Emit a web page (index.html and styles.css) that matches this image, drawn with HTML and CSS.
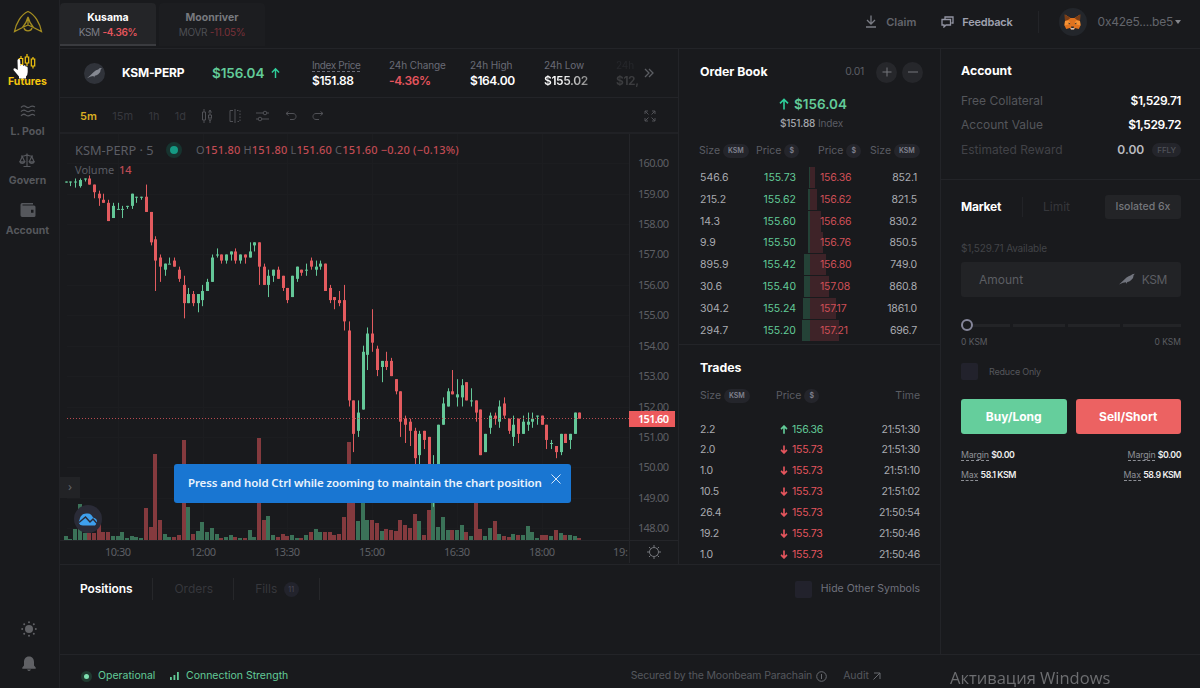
FILE: index.html
```html
<!DOCTYPE html>
<html lang="en">
<head>
  <meta charset="UTF-8">
  <meta name="viewport" content="width=device-width, initial-scale=1.0">
  <title>KSM-PERP</title>
  <link rel="stylesheet" href="styles.css">
</head>
<body>
  <svg class="defs">
    <symbol id="bird" viewBox="0 0 16 13"><path d="M0 11.500 3 8.800 7.500 4.600Q9.500 2.800 12 2.200 13 .6 15.800 .7L14.600 2.200Q14.800 5 12 7.300 10.300 8.800 8.300 8.900L7.600 10.700 6.900 9.200 4 9.800Z"/></symbol>
    <symbol id="up" viewBox="0 0 10 12"><path d="M5 11.500V1.500M1 5.400 5 1.400 9 5.400"/></symbol>
    <symbol id="down" viewBox="0 0 10 12"><path d="M5 .5V10.500M1 6.600 5 10.600 9 6.600"/></symbol>
  </svg>

  <div class="app">
    <nav class="sidebar">
      <svg class="sidebar__logo" width="30" height="24" viewBox="0 0 30 24">
        <path d="M1.500 21.500C3 13.500 8 4.500 15 1.500 22 4.500 27 13.500 28.500 21.500L20.500 17.500Q16.500 13 15 7 13.500 13 9.500 17.500ZM15 8V15M9.500 17.500 15 15 20.500 17.500M11 18C12 21.800 18 21.800 19 18"/>
      </svg>
      <a class="nav-item is-active">
        <svg width="18" height="16" viewBox="0 0 18 16"><path d="M3 2v2M3 11v2M1.300 4.500h3.400v6H1.300zM9 0v3M9 9v3M7.300 3h3.400v6H7.300zM15 3v2M15 12v2.500M13.300 5h3.400v7h-3.400z"/></svg>
        <span>Futures</span>
      </a>
      <a class="nav-item">
        <svg width="16" height="14" viewBox="0 0 16 14"><path d="M1 3.500C3 1.200 4.500 1.500 6 2.700 8 4.300 9 3.800 10.500 2.600 12 1.500 13 1.800 15 3M1 7.700C3 5.400 4.500 5.700 6 6.900 8 8.500 9 8 10.500 6.800 12 5.700 13 6 15 7.200M1 11.900C3 9.600 4.500 9.900 6 11.100 8 12.700 9 12.200 10.500 11 12 9.900 13 10.200 15 11.400"/></svg>
        <span>L. Pool</span>
      </a>
      <a class="nav-item">
        <svg width="16" height="15" viewBox="0 0 16 15"><path d="M8 .5V13M4.500 13.500h7M2 3h3L8 2l3 1h3M3.300 3.500.900 8.700M3.300 3.500 5.700 8.700M12.700 3.500 10.300 8.700M12.700 3.500 15.100 8.700M.8 8.800C1.500 11 5 11 5.800 8.800ZM10.200 8.800C11 11 14.500 11 15.200 8.800Z"/></svg>
        <span>Govern</span>
      </a>
      <a class="nav-item nav-item--solid">
        <svg width="16" height="14" viewBox="0 0 16 14"><path fill-rule="evenodd" d="M2.200 0H13v1.500H2.500v1H14Q15.500 2.500 15.500 4V12.500Q15.500 14 14 14H2.200Q.5 14 .5 12.300V1.700Q.5 0 2.200 0ZM11 6.700V9.700H13.500V6.700Z"/></svg>
        <span>Account</span>
      </a>
      <div class="sidebar__bottom">
        <svg width="16" height="16" viewBox="0 0 16 16"><circle cx="8" cy="8" r="4"/><circle cx="8" cy="1.200" r="1"/><circle cx="8" cy="14.800" r="1"/><circle cx="1.200" cy="8" r="1"/><circle cx="14.800" cy="8" r="1"/><circle cx="3.200" cy="3.200" r="1"/><circle cx="12.800" cy="3.200" r="1"/><circle cx="3.200" cy="12.800" r="1"/><circle cx="12.800" cy="12.800" r="1"/></svg>
        <svg width="16" height="16" viewBox="0 0 16 16"><path d="M8 .5C4.500.5 3 3 3 6V9.500L1.300 11.500V12.800H14.700V11.500L13 9.500V6C13 3 11.500.5 8 .5ZM6 13.500H10Q8 16.500 6 13.500Z"/></svg>
      </div>
    </nav>

    <header class="header">
      <div class="market-tab is-active">
        <b>Kusama</b>
        <span class="market-tab__sub">KSM <em>-4.36%</em></span>
      </div>
      <div class="market-tab">
        <b>Moonriver</b>
        <span class="market-tab__sub">MOVR <em>-11.05%</em></span>
      </div>
      <div class="header__right">
        <svg class="stroke" width="12" height="13" viewBox="0 0 12 13"><path d="M6 .5V8.500M2 5 6 9 10 5M1 12h10"/></svg>
        <span class="claim">Claim</span>
        <svg class="stroke stroke--light" width="13" height="12" viewBox="0 0 13 12"><path d="M4 3V1H12V7H10.500M1 3.500H9.500V9H5L3 11V9H1Z"/></svg>
        <span class="feedback">Feedback</span>
        <div class="wallet">
          <span class="wallet__icon">
            <svg width="17" height="16" viewBox="0 0 17 16">
              <path fill="#e0731f" d="M.8.5 6.500 4H10.500L16.200.5 16 7 16.500 11.500 14.800 15 11 14 10 15.500H7L6 14 2.200 15 .5 11.500 1 7Z"/>
              <path fill="#7a3d16" d="M.8.5 6.500 4 4 6 1 7ZM16.200.5 10.500 4 13 6 16 7Z"/>
              <path fill="#f59335" d="M1 7 5 6.500 6.500 10 .5 11.500ZM16 7 12 6.500 10.500 10 16.500 11.500Z"/>
              <path fill="#262a30" d="M4.500 8.500 6.600 10 4.800 10.200ZM12.500 8.500 10.400 10 12.200 10.200ZM7 12.500H10L9.600 14H7.400Z"/>
              <path fill="#cfc2b6" d="M6.500 14H10.500L10 15.500H7Z"/>
            </svg>
          </span>
          <span class="wallet__address">0x42e5....be5</span>
          <i class="wallet__caret"></i>
        </div>
      </div>
    </header>

    <main class="content">
      <section class="chart-panel">
        <div class="ticker">
          <span class="ticker__icon"><svg width="15" height="13"><use href="#bird"/></svg></span>
          <b class="ticker__name">KSM-PERP</b>
          <span class="ticker__price">$156.04</span>
          <svg class="arrow arrow--up" width="9" height="12"><use href="#up"/></svg>
          <dl class="stat stat--index"><dt><u>Index Price</u></dt><dd>$151.88</dd></dl>
          <dl class="stat stat--change"><dt>24h Change</dt><dd class="red">-4.36%</dd></dl>
          <dl class="stat stat--high"><dt>24h High</dt><dd>$164.00</dd></dl>
          <dl class="stat stat--low"><dt>24h Low</dt><dd>$155.02</dd></dl>
          <dl class="stat stat--volume"><dt>24h</dt><dd>$12,</dd></dl>
          <svg class="ticker__more" width="10" height="10" viewBox="0 0 10 10"><path d="M1 1 5 5 1 9M5 1 9 5 5 9"/></svg>
        </div>

        <div class="toolbar">
          <span class="is-active">5m</span><span>15m</span><span>1h</span><span>1d</span>
          <svg width="12" height="14" viewBox="0 0 12 14"><path d="M3 0v3M3 11v3M1.500 3h3v8h-3zM9 1v5M9 12v2M7.500 9.500 9 12 10.500 9.500M7.500 3.500 9 1 10.500 3.500M7.500 6h3v3h-3z"/></svg>
          <svg width="12" height="14" viewBox="0 0 12 14"><path d="M4 1.500H1V12.500H4M6 0V14"/><path stroke-dasharray="1.500 1.500" d="M8 1.500H11V12.500H8"/></svg>
          <svg width="13" height="12" viewBox="0 0 13 12"><path d="M0 3H7M11 3h2M0 9H2M6 9h7"/><circle cx="9" cy="3" r="1.800"/><circle cx="4" cy="9" r="1.800"/></svg>
          <svg width="12" height="10" viewBox="0 0 12 10"><path d="M3.500.5 1 2.500 3.500 4.500M1 2.500H8C12 2.500 12 8.500 8 8.500H5"/></svg>
          <svg width="12" height="10" viewBox="0 0 12 10"><path d="M8.500.5 11 2.500 8.500 4.500M11 2.500H4C0 2.500 0 8.500 4 8.500H7"/></svg>
          <svg class="toolbar__full" width="12" height="12" viewBox="0 0 12 12"><path d="M1 4V1H4M1 1 4.500 4.500M8 1h3V4M11 1 7.500 4.500M1 8v3H4M1 11 4.500 7.500M11 8v3H8M11 11 7.500 7.500"/></svg>
        </div>

        <div class="chart">
          <svg class="chart__svg js-chart" width="618" height="429"></svg>
          <div class="legend">
            <span class="legend__symbol">KSM-PERP · 5</span>
            <i class="legend__dot"></i>
            <span class="legend__ohlc">O<b>151.80</b> H<b>151.80</b> L<b>151.60</b> C<b>151.60</b> <b>−0.20 (−0.13%)</b></span>
          </div>
          <div class="legend-volume">Volume <b>14</b></div>
          <span class="chart__expand">›</span>
          <span class="chart__logo">
            <svg width="20" height="14" viewBox="0 0 20 14"><path fill="#3ea0ee" d="M5 13.500C1 13.500 0 10 1.500 8 2 4 5 1 9 1.500 12 1 14 3 15 5.500 18 6 19.500 8 19 11L17 13.500Z"/><path fill="none" stroke="#2a2b37" stroke-width="1.500" d="M1 10.500 7.500 5 12 10 15 7 19.500 12"/></svg>
          </span>
          <svg class="chart__settings" width="14" height="14" viewBox="0 0 14 14"><circle cx="7" cy="7" r="4.500"/><path d="M7 0V2M7 12v2M0 7H2M12 7h2M2 2 3.500 3.500M10.500 10.500 12 12M2 12 3.500 10.500M10.500 3.500 12 2"/></svg>
          <div class="toast">
            <span>Press and hold Ctrl while zooming to maintain the chart position</span>
            <svg width="10" height="10" viewBox="0 0 10 10"><path d="M.5.5 9.500 9.500M9.500.5.5 9.500"/></svg>
          </div>
        </div>
      </section>

      <section class="book-column">
        <div class="book">
          <div class="book__head">
            <h2>Order Book</h2>
            <span class="book__step">0.01</span>
            <button class="round"><svg width="10" height="10" viewBox="0 0 10 10"><path d="M5 .5V9.500M.5 5H9.500"/></svg></button>
            <button class="round"><svg width="10" height="10" viewBox="0 0 10 10"><path d="M0 5H10"/></svg></button>
          </div>
          <div class="book__price"><svg class="arrow arrow--up" width="10" height="12"><use href="#up"/></svg>$156.04</div>
          <div class="book__index"><b>$151.88</b> Index</div>
          <div class="book__labels">
            <span>Size <i class="pill">KSM</i></span>
            <span>Price <i class="pill">$</i></span>
            <span>Price <i class="pill">$</i></span>
            <span>Size <i class="pill">KSM</i></span>
          </div>
          <div class="book-row"><div class="bid" style="--depth: 1.500px"><span>546.6</span><b>155.73</b></div><div class="ask" style="--depth: 5px"><b>156.36</b><span>852.1</span></div></div>
          <div class="book-row"><div class="bid" style="--depth: 2.500px"><span>215.2</span><b>155.62</b></div><div class="ask" style="--depth: 7px"><b>156.62</b><span>821.5</span></div></div>
          <div class="book-row"><div class="bid" style="--depth: 2.500px"><span>14.3</span><b>155.60</b></div><div class="ask" style="--depth: 11px"><b>156.66</b><span>830.2</span></div></div>
          <div class="book-row"><div class="bid" style="--depth: 2.500px"><span>9.9</span><b>155.50</b></div><div class="ask" style="--depth: 13px"><b>156.76</b><span>850.5</span></div></div>
          <div class="book-row"><div class="bid" style="--depth: 6px"><span>895.9</span><b>155.42</b></div><div class="ask" style="--depth: 16px"><b>156.80</b><span>749.0</span></div></div>
          <div class="book-row"><div class="bid" style="--depth: 6px"><span>30.6</span><b>155.40</b></div><div class="ask" style="--depth: 19px"><b>157.08</b><span>860.8</span></div></div>
          <div class="book-row"><div class="bid" style="--depth: 7.500px"><span>304.2</span><b>155.24</b></div><div class="ask" style="--depth: 26px"><b>157.17</b><span>1861.0</span></div></div>
          <div class="book-row"><div class="bid" style="--depth: 8.500px"><span>294.7</span><b>155.20</b></div><div class="ask" style="--depth: 29px"><b>157.21</b><span>696.7</span></div></div>
        </div>

        <div class="trades">
          <h2>Trades</h2>
          <div class="trades__row trades__row--labels"><span>Size <i class="pill">KSM</i></span><span>Price <i class="pill">$</i></span><span>Time</span></div>
          <div class="trades__row"><span>2.2</span><span class="green"><svg class="arrow" width="8" height="9" viewBox="0 0 10 12"><use href="#up"/></svg>156.36</span><span>21:51:30</span></div>
          <div class="trades__row"><span>2.0</span><span class="red"><svg class="arrow" width="8" height="9" viewBox="0 0 10 12"><use href="#down"/></svg>155.73</span><span>21:51:30</span></div>
          <div class="trades__row"><span>1.0</span><span class="red"><svg class="arrow" width="8" height="9" viewBox="0 0 10 12"><use href="#down"/></svg>155.73</span><span>21:51:10</span></div>
          <div class="trades__row"><span>10.5</span><span class="red"><svg class="arrow" width="8" height="9" viewBox="0 0 10 12"><use href="#down"/></svg>155.73</span><span>21:51:02</span></div>
          <div class="trades__row"><span>26.4</span><span class="red"><svg class="arrow" width="8" height="9" viewBox="0 0 10 12"><use href="#down"/></svg>155.73</span><span>21:50:54</span></div>
          <div class="trades__row"><span>19.2</span><span class="red"><svg class="arrow" width="8" height="9" viewBox="0 0 10 12"><use href="#down"/></svg>155.73</span><span>21:50:46</span></div>
          <div class="trades__row"><span>1.0</span><span class="red"><svg class="arrow" width="8" height="9" viewBox="0 0 10 12"><use href="#down"/></svg>155.73</span><span>21:50:46</span></div>
        </div>
      </section>

      <section class="positions">
        <div class="positions__tab is-active">Positions</div>
        <div class="positions__tab">Orders</div>
        <div class="positions__tab">Fills <i>11</i></div>
        <label class="positions__hide"><i class="checkbox"></i>Hide Other Symbols</label>
      </section>

      <aside class="account">
        <div class="account__summary">
          <h2>Account</h2>
          <div class="account__row"><span>Free Collateral</span><b>$1,529.71</b></div>
          <div class="account__row"><span>Account Value</span><b>$1,529.72</b></div>
          <div class="account__row account__row--dim"><span>Estimated Reward</span><b>0.00 <i class="pill">FFLY</i></b></div>
        </div>
        <div class="order">
          <div class="order__tabs">
            <span class="is-active">Market</span>
            <span>Limit</span>
            <button>Isolated 6x</button>
          </div>
          <div class="order__available">$1,529.71 Available</div>
          <div class="order__amount"><span>Amount</span><svg width="16" height="13"><use href="#bird"/></svg><span>KSM</span></div>
          <div class="slider"><i></i><i></i><i></i><i></i><b></b></div>
          <div class="order__range"><span>0 KSM</span><span>0 KSM</span></div>
          <label class="order__reduce"><i class="checkbox"></i>Reduce Only</label>
          <div class="order__buttons"><button class="buy">Buy/Long</button><button class="sell">Sell/Short</button></div>
          <div class="order__info"><span><u>Margin</u> <b>$0.00</b></span><span><u>Margin</u> <b>$0.00</b></span></div>
          <div class="order__info"><span><u>Max</u> <b>58.1 KSM</b></span><span><u>Max</u> <b>58.9 KSM</b></span></div>
        </div>
      </aside>
    </main>

    <footer class="footer">
      <i class="footer__dot"></i><span class="footer__status">Operational</span>
      <svg width="9" height="8" viewBox="0 0 9 8"><path d="M0 5H1.800V8H0ZM3.500 3H5.300V8H3.500ZM7 0H8.800V8H7Z"/></svg><span class="footer__connection">Connection Strength</span>
      <div class="footer__right">
        <span class="footer__secured">Secured by the Moonbeam Parachain</span>
        <svg class="stroke" width="11" height="11" viewBox="0 0 11 11"><circle cx="5.500" cy="5.500" r="4.800"/><path d="M5.500 3V8"/></svg>
        <span class="footer__audit">Audit</span>
        <svg class="stroke" width="8" height="8" viewBox="0 0 8 8"><path d="M.5 7.500 7 1M1 1H7V7"/></svg>
      </div>
    </footer>
  </div>

  <div class="watermark">Активация Windows</div>
  <svg class="cursor" width="17" height="20" viewBox="0 0 17 20"><path d="M4.500 1.500Q4.500 0 5.700 0 7 0 7.200 1.500L7.500 7 8.500 5.800Q10 5.500 10.300 7L11.300 6.300Q12.700 6.200 12.800 7.700 14.500 7 14.700 9V13Q14.700 16 13 17.500V19.500H6V17.500L.5 11Q0 9 2 9.200L4.800 11Z"/></svg>

  <script src="chart.js"></script>
</body>
</html>
```
FILE: styles.css
```css
:root {
  --bg: #191a1d;
  --line: #232428;
  --green: #62cb98;
  --red: #e5555d;
  --muted: #5b5d64;
  --dim: #37383d;
  --text: #a9abb1;
}

* {
  box-sizing: border-box;
}

body {
  margin: 0;
  background: var(--bg);
  color: var(--text);
  font-family: Inter, 'Liberation Sans', sans-serif;
  font-size: 11px;
  line-height: 14px;
  overflow: hidden;
}

i,
em {
  font-style: normal;
}

u {
  text-decoration: none;
  border-bottom: 1px dashed currentColor;
}

h2 {
  margin: 0;
  color: #fff;
  font-size: 12.3px;
  font-weight: 700;
  line-height: 16px;
}

button {
  border: 0;
  padding: 0;
  font-family: inherit;
}

.defs {
  display: none;
}

.green {
  color: var(--green);
}

.red {
  color: var(--red);
}

.app {
  display: grid;
  grid-template: 49px 605px 34px / 60px 1fr;
  height: 688px;
}

/* sidebar */

.sidebar {
  grid-row: 1 / 4;
  display: flex;
  flex-direction: column;
  align-items: center;
  border-right: 1px solid #222327;
  padding: 10px 4px 16px 0;
}

.sidebar__logo {
  flex: none;
  margin-bottom: 20px;
  fill: none;
  stroke: #a48d21;
  stroke-width: 1.3;
}

.nav-item {
  display: flex;
  flex: none;
  flex-direction: column;
  align-items: center;
  justify-content: space-between;
  height: 35px;
  margin-bottom: 14.6px;
  color: #55575c;
  font-size: 10.5px;
  font-weight: 700;
}

.nav-item svg {
  fill: none;
  stroke: currentColor;
  stroke-width: 1.2;
}

.nav-item--solid svg {
  fill: currentColor;
  stroke: none;
}

.nav-item.is-active {
  color: #f5c70f;
}

.sidebar__bottom {
  display: flex;
  flex-direction: column;
  gap: 19px;
  margin-top: auto;
  padding-left: 2px;
  fill: #606165;
}

/* header */

.header {
  display: flex;
  border-bottom: 1px solid var(--line);
}

.market-tab {
  display: flex;
  flex-direction: column;
  align-items: center;
  width: 96px;
  height: 43px;
  margin: 3px 3px 0 0;
  border-bottom: 2px solid transparent;
  border-radius: 4px 4px 0 0;
  padding-top: 7px;
  background: #1c1d20;
  color: #77797e;
  font-size: 10.5px;
  line-height: 15px;
}

.market-tab + .market-tab {
  width: 106px;
}

.market-tab.is-active {
  border-color: #3a3b3f;
  background: #242528;
  color: #fff;
}

.market-tab__sub {
  color: #4d4f54;
  font-size: 10px;
  letter-spacing: -0.3px;
}

.market-tab em {
  color: #7a3139;
}

.market-tab.is-active .market-tab__sub {
  color: #7b7d87;
}

.market-tab.is-active em {
  color: var(--red);
  font-weight: 600;
}

.header__right {
  display: flex;
  align-items: center;
  height: 43px;
  margin-left: auto;
  margin-right: 19px;
}

.stroke {
  fill: none;
  stroke: #7a7c84;
  stroke-width: 1.3;
}

.stroke--light {
  stroke: #9294a2;
}

.claim {
  width: 55px;
  margin-left: 9px;
  color: #63656c;
  font-weight: 600;
}

.feedback {
  margin-left: 8px;
  color: #9fa1af;
  font-weight: 600;
  letter-spacing: -0.2px;
}

.wallet {
  display: flex;
  align-items: center;
  height: 22px;
  margin-left: 25px;
  border-left: 1px solid var(--line);
  padding-left: 20px;
}

.wallet__icon {
  display: grid;
  place-items: center;
  width: 28px;
  height: 28px;
  border-radius: 50%;
  background: #23262b;
}

.wallet__address {
  margin-left: 11px;
  color: #63656c;
  font-size: 12px;
  letter-spacing: -0.25px;
}

.wallet__caret {
  margin-left: 2px;
  border: 3px solid transparent;
  border-top: 4px solid #85878d;
  border-bottom: 0;
}

/* content */

.content {
  display: grid;
  grid-template: 515px 90px / 619px 262px 1fr;
}

.chart-panel {
  border-right: 1px solid var(--line);
  overflow: hidden;
}

.ticker {
  display: flex;
  align-items: center;
  height: 49px;
  border-bottom: 1px solid var(--line);
  padding-left: 24px;
  color: #fff;
}

.ticker__icon {
  display: grid;
  place-items: center;
  width: 21px;
  height: 21px;
  border-radius: 50%;
  background: #30333a;
  fill: #858992;
}

.ticker__name {
  width: 90px;
  margin-left: 17px;
  font-size: 12px;
  letter-spacing: -0.2px;
}

.ticker__price {
  width: 59px;
  color: var(--green);
  font-size: 13.5px;
  font-weight: 600;
  letter-spacing: -0.1px;
}

.arrow {
  fill: none;
  stroke: currentColor;
  stroke-width: 1.6;
}

.arrow--up {
  color: #2fcf9b;
}

.stat {
  width: 77px;
  margin: 0;
  white-space: nowrap;
}

.stat--index {
  margin-left: 32px;
}

.stat--change {
  width: 81px;
}

.stat--high {
  width: 74px;
}

.stat--low {
  width: 72px;
}

.stat--volume {
  width: 28px;
  opacity: 0.15;
}

.stat dt {
  color: #696b76;
  font-size: 10px;
  letter-spacing: -0.1px;
}

.stat--index dt {
  letter-spacing: -0.4px;
}

.stat u {
  display: inline-block;
  line-height: 12px;
}

.stat dd {
  margin: 2px 0 0;
  font-size: 12px;
  font-weight: 600;
  letter-spacing: -0.4px;
}

.stat--low dd {
  width: 48px;
  background: linear-gradient(to right, #fff 35%, #777);
  background-clip: text;
  color: transparent;
}

.ticker__more {
  fill: none;
  stroke: #5b5d62;
  stroke-width: 1.3;
}

.toolbar {
  display: flex;
  align-items: center;
  height: 36px;
  border-bottom: 2px solid #202125;
  padding: 2px 22px 0 20px;
  color: var(--dim);
  gap: 15.4px;
}

.toolbar .is-active {
  color: #d9ae22;
  font-weight: 600;
}

.toolbar svg {
  fill: none;
  stroke: #505156;
}

.toolbar .toolbar__full {
  margin-left: auto;
}

/* chart */

.chart {
  position: relative;
  height: 430px;
  font-family: 'Noto Sans', sans-serif;
}

.chart__svg {
  display: block;
}

.grid-line {
  stroke: #1c1d20;
}

.axis-line {
  stroke: #242529;
}

.axis-label {
  fill: #5d5f64;
  font-size: 11px;
}

.candle-up {
  fill: #64c798;
}

.candle-down {
  fill: #e35b5f;
}

.volume-up {
  fill: #3b7258;
}

.volume-down {
  fill: #843a3e;
}

.price-line {
  stroke: #b84a50;
  stroke-dasharray: 1 2;
}

.price-tag {
  fill: #ec5a5c;
}

.price-tag-label {
  fill: #fff;
  font-size: 11px;
  font-weight: 600;
}

.legend {
  position: absolute;
  top: 7px;
  left: 15px;
  display: flex;
  align-items: center;
  color: var(--muted);
}

.legend__symbol {
  width: 91px;
  font-size: 12.8px;
  line-height: 18px;
}

.legend__dot {
  width: 16px;
  height: 16px;
  border: 4px solid #17332f;
  border-radius: 50%;
  background: #159a84;
}

.legend__ohlc {
  margin-left: 14px;
  font-size: 11px;
  letter-spacing: 0.19px;
  white-space: pre;
}

.legend b,
.legend-volume b {
  color: #c04b53;
  font-weight: 500;
}

.legend-volume {
  position: absolute;
  top: 29px;
  left: 15px;
  color: var(--muted);
  font-size: 11px;
}

.legend-volume b {
  margin-left: 2px;
}

.chart__expand {
  position: absolute;
  top: 343px;
  left: 0;
  width: 20px;
  height: 21px;
  background: #222326;
  color: #606267;
  font-size: 13px;
  line-height: 19px;
  text-align: center;
}

.chart__logo {
  position: absolute;
  top: 371px;
  left: 14px;
  display: grid;
  place-items: center;
  width: 28px;
  height: 28px;
  border-radius: 50%;
  background: #2a2b37;
}

.chart__settings {
  position: absolute;
  top: 411px;
  left: 587px;
  fill: none;
  stroke: #75777c;
}

.toast {
  position: absolute;
  top: 330px;
  left: 114px;
  display: flex;
  justify-content: space-between;
  width: 397px;
  height: 39px;
  border-radius: 3px;
  padding: 10px 10px 0 14px;
  background: #1976d2;
  color: #e9f3fd;
  font-size: 11.5px;
  font-weight: 600;
  letter-spacing: -0.11px;
  line-height: 18px;
  white-space: nowrap;
}

.toast svg {
  fill: none;
  stroke: #d5e6f8;
}

/* order book */

.book-column {
  border-right: 1px solid var(--line);
  overflow: hidden;
}

.book {
  height: 296px;
  border-bottom: 1px solid var(--line);
  padding: 12px 20px 0 21px;
}

.book__head {
  display: flex;
  align-items: center;
  height: 22px;
  margin-right: -3px;
}

.book__step {
  margin: 0 12px 0 auto;
  color: var(--muted);
  font-size: 10.5px;
  letter-spacing: -0.3px;
}

.round {
  display: grid;
  place-items: center;
  width: 21px;
  height: 21px;
  border-radius: 50%;
  background: #26272b;
  stroke: #75777d;
}

.round + .round {
  margin-left: 5px;
}

.book__price {
  display: flex;
  align-items: center;
  justify-content: center;
  gap: 5px;
  height: 20px;
  margin-top: 11px;
  padding-left: 6px;
  color: var(--green);
  font-size: 13.5px;
  font-weight: 600;
}

.book__index {
  margin-top: 2px;
  padding-left: 3px;
  color: var(--muted);
  font-size: 10px;
  letter-spacing: -0.15px;
  text-align: center;
}

.book__index b {
  color: #a3a5ab;
  font-weight: 500;
}

.book__labels {
  display: grid;
  grid-template-columns: 57px 62px 52px 1fr;
  margin: 14px -2px 9px -1px;
  color: var(--muted);
  font-size: 10.5px;
  white-space: nowrap;
}

.pill {
  display: inline-block;
  border-radius: 7px;
  margin-left: 0;
  padding: 0 5px;
  background: #24252b;
  color: #80828f;
  font-size: 7px;
  font-weight: 600;
  letter-spacing: -0.1px;
  line-height: 14px;
  vertical-align: 1px;
}

.book-row {
  display: grid;
  grid-template-columns: 110px 1fr;
  height: 21.8px;
  font-size: 10.5px;
  line-height: 22px;
}

.book-row b {
  font-weight: 400;
}

.bid,
.ask {
  display: flex;
  justify-content: space-between;
  background-repeat: no-repeat;
  background-size: var(--depth) 21px;
}

.bid {
  padding-right: 14px;
  background-image: linear-gradient(#244237, #244237);
  background-position: right 0;
}

.bid b {
  color: var(--green);
}

.ask {
  padding: 0 3px 0 10px;
  background-image: linear-gradient(#3e2328, #3e2328);
  background-position: 0 0;
  letter-spacing: -0.2px;
}

.ask b {
  color: #cf4f57;
}

/* trades */

.trades {
  padding: 15px 20px 0 21px;
}

.trades__row {
  display: grid;
  grid-template-columns: 80px 1fr 70px;
  height: 20.95px;
  font-size: 10.5px;
  letter-spacing: -0.25px;
  line-height: 21px;
}

.trades__row span:last-child {
  text-align: right;
}

.trades__row .arrow {
  margin-right: 4px;
  vertical-align: -1px;
  stroke-width: 2.2;
}

.trades__row--labels {
  grid-template-columns: 76px 1fr 70px;
  height: 42.5px;
  padding-top: 13px;
  color: var(--muted);
  letter-spacing: 0;
  line-height: 14px;
}

/* positions */

.positions {
  grid-row: 2;
  grid-column: 1 / 3;
  display: flex;
  align-items: flex-start;
  border-top: 1px solid var(--line);
  border-right: 1px solid var(--line);
  padding: 13px 20px 0;
  font-size: 12px;
}

.positions__tab {
  height: 22px;
  border-right: 1px solid #26272a;
  padding: 0 20px 0 21px;
  color: #36373c;
  line-height: 22px;
}

.positions__tab.is-active {
  padding-left: 0;
  color: #fff;
  font-weight: 600;
  letter-spacing: -0.1px;
}

.positions__tab i {
  display: inline-block;
  width: 15px;
  height: 15px;
  margin-left: 3px;
  border-radius: 50%;
  background: #22232c;
  color: #4a4b58;
  font-size: 7px;
  line-height: 15px;
  text-align: center;
  vertical-align: 1px;
}

.positions__hide {
  display: flex;
  align-items: center;
  gap: 9px;
  height: 22px;
  margin-left: auto;
  color: #6f717c;
  font-size: 10.5px;
}

.checkbox {
  width: 17px;
  height: 17px;
  border-radius: 2px;
  background: #22222c;
}

/* account */

.account {
  grid-row: 1 / 3;
  grid-column: 3;
}

.account__summary {
  height: 131px;
  border-bottom: 1px solid var(--line);
  padding: 14px 19px 0 20px;
}

.account__summary h2 {
  margin-bottom: 9.5px;
}

.account__row {
  display: flex;
  justify-content: space-between;
  height: 24.5px;
  color: #54565b;
  font-size: 12px;
  line-height: 24px;
}

.account__row b {
  color: #fff;
  font-weight: 600;
  letter-spacing: -0.45px;
}

.account__row--dim {
  color: #414247;
}

.account__row--dim b {
  color: #bbbcc0;
  letter-spacing: 0;
}

.account__row .pill {
  margin-left: 5px;
  color: #505259;
  font-size: 8px;
  font-weight: 500;
}

.order {
  padding: 14px 19px 0 20px;
}

.order__tabs {
  display: flex;
  align-items: center;
  height: 25px;
  color: #36373b;
  font-size: 12px;
}

.order__tabs span {
  width: 62px;
  border-right: 1px solid #222327;
  line-height: 20px;
}

.order__tabs span + span {
  border: 0;
  padding-left: 20px;
}

.order__tabs .is-active {
  color: #fff;
  font-weight: 700;
  letter-spacing: -0.2px;
}

.order__tabs button {
  width: 76px;
  height: 24px;
  margin-left: auto;
  border-radius: 3px;
  background: #232427;
  color: #75777c;
  font-size: 10.5px;
  font-weight: 500;
}

.order__available {
  margin: 22px 0 7px;
  color: #414347;
  font-size: 10px;
  letter-spacing: -0.15px;
}

.order__amount {
  display: flex;
  align-items: center;
  gap: 7px;
  height: 35px;
  border-radius: 3px;
  padding: 0 14px 0 18px;
  background: #222326;
  color: #5c5e63;
  fill: #72757e;
  font-size: 12px;
}

.order__amount span:first-child {
  margin-right: auto;
}

.order__amount span:last-child {
  letter-spacing: -0.4px;
}

.slider {
  position: relative;
  display: grid;
  grid-template-columns: 49px 52px 52px 1fr;
  gap: 3px;
  margin-top: 27px;
}

.slider i {
  height: 3px;
  background: #232427;
}

.slider b {
  position: absolute;
  top: -5px;
  left: 0;
  width: 12px;
  height: 12px;
  border: 2px solid #85869a;
  border-radius: 50%;
  background: var(--bg);
}

.order__range {
  display: flex;
  justify-content: space-between;
  margin-top: 8px;
  color: #5b5d62;
  font-size: 8.5px;
}

.order__reduce {
  display: flex;
  align-items: center;
  gap: 11px;
  margin-top: 14px;
  color: #55575c;
  font-size: 9px;
  letter-spacing: -0.2px;
}

.order__buttons {
  display: grid;
  grid-template-columns: 1fr 1fr;
  gap: 9px;
  margin: 19px 0 14px;
}

.order__buttons button {
  height: 35px;
  border-radius: 3px;
  background: #65ce9c;
  color: #fff;
  font-size: 12px;
  font-weight: 700;
}

.order__buttons .sell {
  background: #ec6262;
}

.order__info {
  display: flex;
  justify-content: space-between;
  height: 19.5px;
  color: #8d8f95;
  font-size: 8.8px;
  letter-spacing: -0.15px;
  line-height: 14px;
}

.order__info u {
  display: inline-block;
  line-height: 11px;
}

.order__info b {
  color: #eee;
  font-weight: 600;
  letter-spacing: -0.45px;
}

/* footer */

.footer {
  grid-column: 2;
  display: flex;
  align-items: center;
  border-top: 1px solid var(--line);
  padding: 9px 0 0 21px;
  color: var(--green);
  fill: var(--green);
  font-size: 10.5px;
}

.footer__dot {
  width: 11px;
  height: 11px;
  border: 3px solid #203a30;
  border-radius: 50%;
  background: #7ee0b0;
}

.footer__status {
  width: 72px;
  margin-left: 6px;
}

.footer__connection {
  margin-left: 7px;
}

.footer__right {
  display: flex;
  align-items: center;
  margin-left: auto;
  margin-right: 319px;
  color: #55585d;
}

.footer__secured {
  letter-spacing: -0.15px;
}

.footer .stroke {
  margin-left: 4px;
  fill: none;
  stroke: #686a70;
  stroke-width: 1;
}

.footer__audit {
  margin-left: 16px;
}

.watermark {
  position: fixed;
  top: 667px;
  left: 950px;
  color: #6d6e71;
  font-family: 'Open Sans', sans-serif;
  font-size: 16.5px;
  line-height: 22px;
  white-space: nowrap;
}

.cursor {
  position: fixed;
  top: 59px;
  left: 13px;
  fill: #fff;
}
```
FILE: chart.js
```js
// open, high, low, close, volume height
const candles = [
  [159.4, 159.4, 159.4, 159.4, 4], [159.4, 159.4, 159.25, 159.4, 1], [159.4, 159.5, 159.2, 159.4, 11],
  [159.25, 159.5, 159.2, 159.45, 36], [159.5, 159.5, 159.4, 159.5, 7], [159.5, 159.6, 159.3, 159.3, 7],
  [159.3, 159.3, 158.85, 159.05, 7], [159, 159.1, 158.6, 158.85, 17], [158.8, 159, 158.7, 158.7, 8],
  [158.7, 158.8, 158.1, 158.1, 8], [158.2, 158.7, 158.2, 158.6, 4], [158.5, 158.7, 158.5, 158.5, 4],
  [158.5, 158.6, 158.2, 158.5, 8], [158.6, 158.6, 158.5, 158.6, 2], [158.6, 159, 158.5, 159, 4],
  [158.9, 158.9, 158.7, 158.9, 3], [158.9, 158.9, 158.8, 158.9, 2], [158.9, 159.3, 158.4, 158.4, 32],
  [158.4, 158.4, 157.3, 157.4, 13], [157.5, 157.6, 155.8, 156.8, 86], [156.9, 157, 156.1, 156.6, 20],
  [156.5, 156.7, 156.3, 156.7, 6], [156.7, 156.9, 156.7, 156.7, 3], [156.8, 156.9, 156.6, 156.6, 3],
  [156.5, 156.6, 156.1, 156.2, 5], [156, 156.3, 154.9, 155.4, 100], [155.4, 155.9, 155.4, 155.7, 33],
  [155.7, 155.8, 155.3, 155.4, 6], [155.4, 155.7, 155.1, 155.7, 9], [155.5, 156, 155.3, 155.8, 18],
  [155.8, 156.2, 155.8, 156.1, 8], [156.1, 157, 156.1, 156.9, 12], [157, 157.2, 156.9, 157, 6],
  [157, 157, 156.7, 156.8, 2], [156.8, 157, 156.7, 157, 3], [157, 157.1, 156.8, 157.1, 5],
  [157.1, 157.2, 156.7, 156.8, 3], [156.8, 157, 156.7, 157, 2], [157, 157, 156.7, 156.9, 2],
  [156.9, 157.4, 156.9, 157.1, 10], [157.3, 157.4, 157.1, 157.4, 3], [157.4, 157.4, 156, 156.6, 102],
  [156.6, 156.7, 156, 156, 20], [156, 156.5, 155.6, 156.3, 24], [156.3, 156.5, 156.1, 156.5, 5],
  [156.5, 156.6, 156.2, 156.2, 3], [156.3, 156.3, 155.8, 155.9, 6], [155.9, 155.9, 155.4, 155.5, 4],
  [155.6, 156.3, 155.6, 156.3, 5], [156.2, 156.6, 156.1, 156.6, 2], [156.5, 156.5, 156.3, 156.4, 2],
  [156.5, 156.7, 156.3, 156.5, 5], [156.8, 156.9, 156.5, 156.6, 8], [156.5, 156.8, 156.3, 156.6, 11],
  [156.6, 156.8, 156.5, 156.7, 8], [156.7, 156.7, 155.8, 155.8, 8], [155.9, 156, 155.4, 155.5, 8],
  [155.6, 155.6, 155.2, 155.5, 5], [155.5, 155.8, 155.3, 155.4, 6], [155.5, 156, 154.5, 154.8, 23],
  [154.5, 154.8, 152, 152.2, 98], [152.2, 152.2, 150.5, 151.1, 50], [151.2, 152.2, 151, 151.8, 19],
  [151.9, 154, 151.9, 153.8, 40], [153.7, 154.6, 153.2, 154.4, 20], [154.4, 155.2, 153.8, 154.1, 20],
  [153.9, 154, 153, 153.2, 17], [153.3, 153.5, 152.8, 153.5, 9], [153.5, 153.8, 153.2, 153.3, 11],
  [153.5, 153.6, 153, 153, 10], [152.9, 152.9, 152.4, 152.5, 9], [152.5, 152.5, 151, 151.5, 20],
  [151.6, 151.7, 150.8, 151.4, 15], [151.5, 151.6, 150.7, 151.2, 12], [151.2, 151.3, 150, 150.3, 26],
  [150.4, 151.2, 150, 151.1, 19], [151.2, 151.2, 150.6, 150.9, 5], [151, 151, 149.7, 150, 30],
  [149.9, 150.4, 148.7, 150, 37], [150, 151.4, 150, 151.4, 13], [151.4, 152.3, 151.4, 152.1, 23],
  [152, 152.6, 152, 152.5, 10], [152.5, 153.2, 152.4, 152.4, 10], [152.3, 152.9, 152, 152.4, 10],
  [152.3, 152.9, 152, 152.7, 15], [152.8, 152.8, 152.2, 152.2, 8], [152.2, 152.6, 152, 152.2, 4],
  [152.2, 152.2, 151.5, 151.8, 40], [151.9, 151.9, 150.4, 150.4, 11], [150.5, 151.1, 150.5, 151.1, 4],
  [151.3, 151.8, 151.1, 151.7, 12], [151.7, 151.8, 151.4, 151.6, 19], [151.5, 152.2, 151.3, 152, 6],
  [152.1, 152.3, 151.6, 151.7, 4], [151.6, 151.6, 151.1, 151.2, 3], [151, 151.7, 150.7, 151.4, 6],
  [151.6, 151.6, 150.8, 151.1, 5], [151.1, 151.7, 151.1, 151.5, 5], [151.4, 151.8, 151.2, 151.5, 14],
  [151.5, 151.8, 151.3, 151.6, 8], [151.7, 151.7, 151.4, 151.7, 2], [151.7, 151.7, 151.4, 151.4, 5],
  [151.4, 151.4, 150.6, 150.9, 5], [150.8, 150.9, 150.6, 150.8, 4], [150.7, 150.7, 150.3, 150.5, 10],
  [150.5, 151.1, 150.4, 151.1, 7], [151.1, 151.1, 150.8, 150.8, 5], [150.9, 151.1, 150.6, 151.1, 5],
  [151.1, 151.8, 151.1, 151.8, 4], [151.8, 151.8, 151.6, 151.6, 2]
];

const svg = document.querySelector('.js-chart');
const BASE = 406;
const candleX = i => Math.round(5.75 + i * 4.713);
const priceY = price => 29.3 + (160 - price) * 30.4;

function add(tag, className, attrs, text) {
  const el = document.createElementNS('http://www.w3.org/2000/svg', tag);
  el.setAttribute('class', className);
  Object.keys(attrs).forEach(key => el.setAttribute(key, attrs[key]));
  if (text) el.textContent = text;
  svg.appendChild(el);
}

function line(className, x1, y1, x2, y2) {
  add('line', className, { x1, y1, x2, y2 });
}

for (let price = 148; price <= 160; price++) {
  const y = Math.round(priceY(price));
  line('grid-line', 7, y + 0.5, 569, y + 0.5);
  add('text', 'axis-label', { x: 578, y: y + 4, textLength: 31 }, price.toFixed(2));
}

['10:30', '12:00', '13:30', '15:00', '16:30', '18:00'].forEach((time, i) => {
  const x = Math.round(58 + i * 84.7);
  line('grid-line', x + 0.5, 0, x + 0.5, BASE);
  add('text', 'axis-label', { x: x - 13, y: 422, textLength: 26 }, time);
});
add('text', 'axis-label', { x: 553, y: 422, textLength: 15 }, '19:');

line('axis-line', 569.5, 0, 569.5, 429);
line('axis-line', 0, 406.5, 618, 406.5);

candles.forEach(([open, high, low, close, volume], i) => {
  const className = close < open ? 'volume-down' : 'volume-up';
  add('rect', className, { x: candleX(i) - 2, y: BASE - volume, width: 4, height: volume });
});

candles.forEach(([open, high, low, close], i) => {
  const x = candleX(i);
  const className = close < open ? 'candle-down' : 'candle-up';
  const top = priceY(Math.max(open, close));
  const height = Math.max(1, priceY(Math.min(open, close)) - top);
  add('rect', className, { x: x - 1, y: top, width: 3, height });
  add('rect', className, { x, y: priceY(high), width: 1, height: Math.max(1, priceY(low) - priceY(high)) });
});

line('price-line', 7, 284.5, 569, 284.5);
add('rect', 'price-tag', { x: 569, y: 277, width: 46, height: 16 });
add('text', 'price-tag-label', { x: 578, y: 289, textLength: 31 }, '151.60');
```
